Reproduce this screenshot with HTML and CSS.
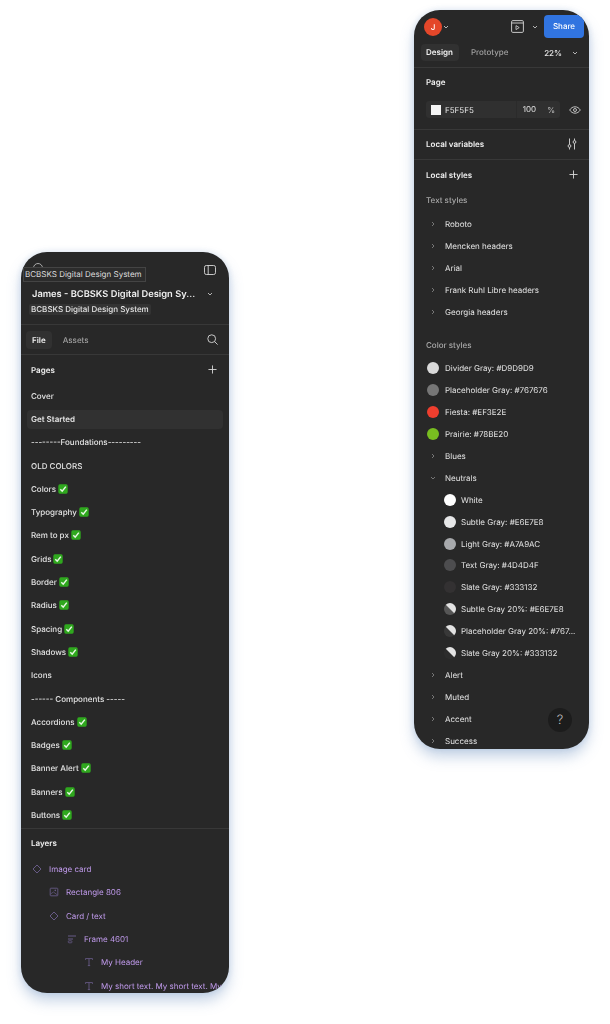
FILE: index.html
```html
<!DOCTYPE html>
<html lang="en">

<head>
  <meta charset="UTF-8">
  <meta name="viewport" content="width=device-width, initial-scale=1.0">
  <title>Design panels</title>
  <link rel="stylesheet" href="styles.css">
</head>

<body>
  <svg class="defs" width="0" height="0">
    <symbol id="check" viewBox="0 0 10 10">
      <rect x="0.3" y="0.3" width="9.4" height="9.4" rx="1.6" fill="#2fa81e"/>
      <path d="M2.3 5.2 4.2 7.2 7.8 2.6" fill="none" stroke="#e8f7e4" stroke-width="1.5"/>
    </symbol>
    <symbol id="chev-down" viewBox="0 0 8 8">
      <path d="M2 3 4 5 6 3" fill="none" stroke="currentColor" stroke-width="1"/>
    </symbol>
    <symbol id="chev-right" viewBox="0 0 8 8">
      <path d="M3 2 5 4 3 6" fill="none" stroke="currentColor" stroke-width="1"/>
    </symbol>
    <symbol id="plus" viewBox="0 0 10 10">
      <path d="M5 .5v9M.5 5h9" fill="none" stroke="currentColor" stroke-width="1"/>
    </symbol>
    <symbol id="diamond" viewBox="0 0 10 10">
      <path d="M5 1 9 5 5 9 1 5Z" fill="none" stroke="currentColor" stroke-width="1"/>
    </symbol>
    <symbol id="image" viewBox="0 0 10 10">
      <rect x="1.2" y="1.2" width="7.6" height="7.6" rx=".6" fill="none" stroke="currentColor" stroke-width=".9"/>
      <path d="M1.5 7 4.5 5 8.5 8" fill="none" stroke="currentColor" stroke-width=".7"/>
      <circle cx="6.3" cy="3.4" r=".8" fill="currentColor"/>
    </symbol>
    <symbol id="frame" viewBox="0 0 10 10">
      <path d="M1 2h8M1 5h5" fill="none" stroke="currentColor" stroke-width="1.1"/>
      <rect x="1.3" y="6.8" width="3.6" height="2" rx=".6" fill="none" stroke="currentColor" stroke-width=".8"/>
    </symbol>
    <symbol id="text" viewBox="0 0 10 10">
      <path d="M1.5 2.8V1.6h7v1.2M5 1.6v7M3.8 8.6h2.4" fill="none" stroke="currentColor" stroke-width=".9"/>
    </symbol>
  </svg>

  <div class="stage">

    <!-- File panel -->
    <div class="panel panel-file">
      <div class="file-top">
        <span class="logo-dot"></span>
        <span class="tooltip">BCBSKS Digital Design System</span>
        <svg class="icon-sidebar" width="12" height="10" viewBox="0 0 12 10">
          <rect x=".5" y=".5" width="11" height="9" rx="1.8" fill="none" stroke="#d8d8d8" stroke-width=".9"/>
          <path d="M4.2 .5v9" stroke="#d8d8d8" stroke-width=".9"/>
        </svg>
      </div>
      <div class="file-title">
        <span>James - BCBSKS Digital Design Sy...</span>
        <svg class="chev" width="8" height="8"><use href="#chev-down"/></svg>
      </div>
      <div class="file-sub"><span>BCBSKS Digital Design System</span></div>

      <div class="tabs tabs-file">
        <span class="tab active">File</span>
        <span class="tab">Assets</span>
        <svg class="icon-search" width="11" height="11" viewBox="0 0 11 11">
          <circle cx="4.7" cy="4.7" r="3.9" fill="none" stroke="#d8d8d8" stroke-width=".9"/>
          <path d="M7.6 7.6 10.6 10.6" stroke="#d8d8d8" stroke-width=".9"/>
        </svg>
      </div>

      <div class="section-pages">
        <div class="head">
          <span>Pages</span>
          <svg class="plus" width="9" height="9"><use href="#plus"/></svg>
        </div>
        <div class="page">Cover</div>
        <div class="page current">Get Started</div>
        <div class="page">--------Foundations---------</div>
        <div class="page">OLD COLORS</div>
        <div class="page">Colors <svg class="ok" width="10" height="10"><use href="#check"/></svg></div>
        <div class="page">Typography <svg class="ok" width="10" height="10"><use href="#check"/></svg></div>
        <div class="page">Rem to px <svg class="ok" width="10" height="10"><use href="#check"/></svg></div>
        <div class="page">Grids <svg class="ok" width="10" height="10"><use href="#check"/></svg></div>
        <div class="page">Border <svg class="ok" width="10" height="10"><use href="#check"/></svg></div>
        <div class="page">Radius <svg class="ok" width="10" height="10"><use href="#check"/></svg></div>
        <div class="page">Spacing <svg class="ok" width="10" height="10"><use href="#check"/></svg></div>
        <div class="page">Shadows <svg class="ok" width="10" height="10"><use href="#check"/></svg></div>
        <div class="page">Icons</div>
        <div class="page">------ Components -----</div>
        <div class="page">Accordions <svg class="ok" width="10" height="10"><use href="#check"/></svg></div>
        <div class="page">Badges <svg class="ok" width="10" height="10"><use href="#check"/></svg></div>
        <div class="page">Banner Alert <svg class="ok" width="10" height="10"><use href="#check"/></svg></div>
        <div class="page">Banners <svg class="ok" width="10" height="10"><use href="#check"/></svg></div>
        <div class="page">Buttons <svg class="ok" width="10" height="10"><use href="#check"/></svg></div>
      </div>

      <div class="section-layers">
        <div class="head"><span>Layers</span></div>
        <div class="layer"><svg width="10" height="10"><use href="#diamond"/></svg><span>Image card</span></div>
        <div class="layer depth1"><svg width="10" height="10"><use href="#image"/></svg><span>Rectangle 806</span></div>
        <div class="layer depth1"><svg width="10" height="10"><use href="#diamond"/></svg><span>Card / text</span></div>
        <div class="layer depth2"><svg width="10" height="10"><use href="#frame"/></svg><span>Frame 4601</span></div>
        <div class="layer depth3"><svg width="10" height="10"><use href="#text"/></svg><span>My Header</span></div>
        <div class="layer depth3"><svg width="10" height="10"><use href="#text"/></svg><span>My short text. My short text. My short text.</span></div>
      </div>
    </div>

    <!-- Design panel -->
    <div class="panel panel-design">
      <div class="design-top">
        <span class="avatar">J</span>
        <svg class="chev" width="8" height="8"><use href="#chev-down"/></svg>
        <svg class="icon-present" width="13" height="13" viewBox="0 0 13 13">
          <rect x=".6" y=".6" width="11.8" height="11.8" rx="1.2" fill="none" stroke="#d8d8d8" stroke-width=".9"/>
          <path d="M.6 3h11.8" stroke="#d8d8d8" stroke-width=".9"/>
          <path d="M5 5.6v4l3.2-2z" fill="none" stroke="#d8d8d8" stroke-width=".8"/>
        </svg>
        <svg class="chev chev-present" width="8" height="8"><use href="#chev-down"/></svg>
        <span class="share">Share</span>
      </div>

      <div class="tabs tabs-design">
        <span class="tab active">Design</span>
        <span class="tab">Prototype</span>
        <span class="zoom">22%</span>
        <svg class="chev" width="8" height="8"><use href="#chev-down"/></svg>
      </div>

      <div class="section-page">
        <div class="head"><span>Page</span></div>
        <div class="fill-row">
          <div class="fill">
            <span class="fill-swatch"></span>
            <span class="fill-hex">F5F5F5</span>
            <span class="fill-pct">100</span>
            <span class="fill-unit">%</span>
          </div>
          <svg class="icon-eye" width="12" height="8" viewBox="0 0 12 8">
            <path d="M.7 4C2 1.9 3.8.8 6 .8S10 1.9 11.3 4C10 6.1 8.2 7.2 6 7.2S2 6.1.7 4Z" fill="none" stroke="#cfcfcf" stroke-width=".9"/>
            <circle cx="6" cy="4" r="1.5" fill="none" stroke="#cfcfcf" stroke-width=".9"/>
          </svg>
        </div>
      </div>

      <div class="section-vars">
        <span>Local variables</span>
        <svg width="10" height="12" viewBox="0 0 10 12">
          <path d="M2.5 .5v6M2.5 9.5v2M7.5 .5v2M7.5 5.5v6" stroke="#d8d8d8" stroke-width=".9"/>
          <circle cx="2.5" cy="8" r="1.4" fill="none" stroke="#d8d8d8" stroke-width=".9"/>
          <circle cx="7.5" cy="4" r="1.4" fill="none" stroke="#d8d8d8" stroke-width=".9"/>
        </svg>
      </div>

      <div class="section-styles">
        <div class="head">
          <span>Local styles</span>
          <svg class="plus" width="9" height="9"><use href="#plus"/></svg>
        </div>

        <div class="sub-head">Text styles</div>
        <div class="style"><svg class="arrow" width="8" height="8"><use href="#chev-right"/></svg>Roboto</div>
        <div class="style"><svg class="arrow" width="8" height="8"><use href="#chev-right"/></svg>Mencken headers</div>
        <div class="style"><svg class="arrow" width="8" height="8"><use href="#chev-right"/></svg>Arial</div>
        <div class="style"><svg class="arrow" width="8" height="8"><use href="#chev-right"/></svg>Frank Ruhl Libre headers</div>
        <div class="style"><svg class="arrow" width="8" height="8"><use href="#chev-right"/></svg>Georgia headers</div>

        <div class="sub-head sub-color">Color styles</div>
        <div class="style"><span class="dot c-divider"></span>Divider Gray: #D9D9D9</div>
        <div class="style"><span class="dot c-placeholder"></span>Placeholder Gray: #767676</div>
        <div class="style"><span class="dot c-fiesta"></span>Fiesta: #EF3E2E</div>
        <div class="style"><span class="dot c-prairie"></span>Prairie: #78BE20</div>
        <div class="style"><svg class="arrow" width="8" height="8"><use href="#chev-right"/></svg>Blues</div>
        <div class="style"><svg class="arrow" width="8" height="8"><use href="#chev-down"/></svg>Neutrals</div>
        <div class="style nested"><span class="dot c-white"></span>White</div>
        <div class="style nested"><span class="dot c-subtle"></span>Subtle Gray: #E6E7E8</div>
        <div class="style nested"><span class="dot c-light"></span>Light Gray: #A7A9AC</div>
        <div class="style nested"><span class="dot c-text"></span>Text Gray: #4D4D4F</div>
        <div class="style nested"><span class="dot c-slate"></span>Slate Gray: #333132</div>
        <div class="style nested"><span class="dot alpha a-subtle"></span>Subtle Gray 20%: #E6E7E8</div>
        <div class="style nested"><span class="dot alpha a-placeholder"></span>Placeholder Gray 20%: #767...</div>
        <div class="style nested"><span class="dot alpha a-slate"></span>Slate Gray 20%: #333132</div>
        <div class="style"><svg class="arrow" width="8" height="8"><use href="#chev-right"/></svg>Alert</div>
        <div class="style"><svg class="arrow" width="8" height="8"><use href="#chev-right"/></svg>Muted</div>
        <div class="style"><svg class="arrow" width="8" height="8"><use href="#chev-right"/></svg>Accent</div>
        <div class="style"><svg class="arrow" width="8" height="8"><use href="#chev-right"/></svg>Success</div>
      </div>

      <span class="help">?</span>
    </div>

  </div>
</body>

</html>
```

FILE: styles.css
```css
body {
  margin: 0;
  background: #fff;
  font-family: Inter, "Liberation Sans", sans-serif;
  color: #e4e4e4;
  text-rendering: geometricPrecision;
}

.defs {
  position: absolute;
}

.stage {
  display: flex;
  align-items: flex-start;
  height: 1024px;
  overflow: hidden;
}

.panel {
  position: relative;
  background: #282828;
  border-radius: 26px;
  overflow: hidden;
  box-shadow: 0 8px 14px rgba(92, 132, 184, 0.35), 0 0 6px rgba(92, 132, 184, 0.2);
  filter: blur(0.3px);
  font-size: 8px;
  font-weight: 400;
  white-space: nowrap;
}

.panel-file {
  width: 208px;
  height: 741px;
  margin: 252px 0 0 21px;
}

.panel-design {
  width: 175px;
  height: 739px;
  margin: 10px 0 0 185px;
}

.head {
  display: flex;
  justify-content: space-between;
  align-items: center;
  padding-bottom: 1px;
  box-sizing: border-box;
  font-weight: 600;
  color: #f0f0f0;
}

.plus {
  color: #d8d8d8;
}

.chev {
  flex: none;
  color: #b4b4b4;
}

.tabs {
  display: flex;
  align-items: center;
  border-bottom: 1px solid #383838;
  box-sizing: border-box;
}

.tab {
  color: #a0a0a0;
  border-radius: 4px;
  font-weight: 500;
}

.tab.active {
  background: #313131;
  color: #f0f0f0;
  font-weight: 600;
}

/* file panel */
.file-top {
  position: relative;
  display: flex;
  justify-content: flex-end;
  height: 35px;
  padding: 13px 13px 0 0;
  box-sizing: border-box;
}

.logo-dot {
  position: absolute;
  left: 12px;
  top: 11px;
  width: 8px;
  height: 8px;
  border: 1px solid #aaa;
  border-radius: 50%;
}

.tooltip {
  position: absolute;
  left: 2px;
  top: 15px;
  height: 13px;
  padding: 0 3px 0 1px;
  line-height: 13px;
  background: #2c2c2c;
  border: 1px solid #444;
  color: #dcdcdc;
}

.file-title {
  display: flex;
  justify-content: space-between;
  align-items: center;
  height: 14px;
  padding: 0 15px 0 11px;
  font-size: 9.3px;
  font-weight: 600;
  color: #f0f0f0;
}

.file-sub {
  height: 23px;
  padding: 3px 0 0 8px;
  box-sizing: border-box;
}

.file-sub span {
  display: inline-block;
  padding: 0 2px;
  line-height: 11px;
  background: #333;
  border-radius: 2px;
  font-weight: 500;
}

.tabs-file {
  height: 31px;
  padding: 0 11px 0 5px;
  border-top: 1px solid #383838;
}

.tabs-file .tab {
  padding: 3px 6px;
  line-height: 12px;
}

.tabs-file .tab.active {
  margin-right: 5px;
}

.icon-search {
  margin-left: auto;
}

.section-pages {
  height: 474px;
  padding-top: 7px;
  box-sizing: border-box;
  border-bottom: 1px solid #383838;
}

.section-pages .head {
  height: 16px;
  padding: 0 12px 1px 10px;
  margin-bottom: 9px;
}

.page {
  display: flex;
  align-items: center;
  gap: 2px;
  height: 18.3px;
  margin: 0 6px 5px;
  padding: 0 4px 1px;
  box-sizing: border-box;
  border-radius: 4px;
  font-weight: 500;
}

.page.current {
  background: #313131;
  font-weight: 600;
}

.section-layers {
  padding-top: 6px;
}

.section-layers .head {
  height: 16px;
  padding: 0 10px 1px;
  margin-bottom: 7px;
}

.layer {
  display: flex;
  align-items: center;
  gap: 7px;
  height: 23.3px;
  padding-left: 11px;
  padding-bottom: 1px;
  box-sizing: border-box;
  color: #c09aec;
}

.layer svg {
  flex: none;
  color: #675a86;
}

.depth1 {
  padding-left: 28px;
}

.depth2 {
  padding-left: 46px;
}

.depth3 {
  padding-left: 63px;
}

/* design panel */
.design-top {
  display: flex;
  align-items: center;
  height: 28px;
  padding: 5px 5px 0 10px;
  box-sizing: border-box;
}

.avatar {
  flex: none;
  width: 18px;
  height: 18px;
  line-height: 18px;
  border-radius: 50%;
  background: #e4472a;
  color: #fff;
  text-align: center;
  font-weight: 500;
}

.icon-present {
  margin-left: 61px;
}

.chev-present {
  margin-left: 7px;
}

.share {
  margin-left: 5px;
  width: 40px;
  height: 23px;
  line-height: 23px;
  border-radius: 4px;
  background: #3174e0;
  color: #fff;
  text-align: center;
  font-weight: 500;
}

.tabs-design {
  height: 30px;
  padding: 0 10px 0 7px;
}

.tabs-design .tab {
  padding: 3px 6px;
  line-height: 11px;
}

.tabs-design .tab.active {
  padding: 3px 6px 3px 5px;
  margin-right: 6px;
}

.zoom {
  margin-left: auto;
  margin-right: 9px;
  font-weight: 500;
}

.section-page {
  height: 62px;
  padding: 6px 0 0 12px;
  box-sizing: border-box;
  border-bottom: 1px solid #383838;
}

.section-page .head {
  height: 16px;
  margin-bottom: 11px;
}

.fill-row {
  display: flex;
  align-items: center;
}

.fill {
  display: flex;
  align-items: center;
  flex: none;
  width: 134px;
  height: 17px;
  padding: 0 5px;
  box-sizing: border-box;
  background: #303030;
  border-radius: 3px;
}

.fill-swatch {
  flex: none;
  width: 10px;
  height: 10px;
  background: #f5f5f5;
}

.fill-hex {
  margin-left: 4px;
}

.fill-pct {
  margin-left: auto;
  padding-left: 6px;
  line-height: 17px;
  border-left: 1px solid #2b2b2b;
}

.fill-unit {
  margin-left: 11px;
  color: #bbb;
}

.icon-eye {
  margin-left: 9px;
}

.section-vars {
  display: flex;
  justify-content: space-between;
  align-items: center;
  height: 30px;
  padding: 0 12px 1px;
  box-sizing: border-box;
  border-bottom: 1px solid #383838;
  font-weight: 600;
  color: #f0f0f0;
}

.section-styles {
  padding-top: 7px;
}

.section-styles .head {
  height: 16px;
  padding: 0 11px 1px 12px;
}

.sub-head {
  height: 22px;
  line-height: 22px;
  margin-top: 6px;
  margin-bottom: 2.5px;
  padding-left: 12px;
  color: #a8a8a8;
  font-weight: 500;
}

.sub-color {
  margin-top: 11px;
  margin-bottom: 2px;
}

.style {
  display: flex;
  align-items: center;
  height: 21.9px;
  padding-left: 31px;
  padding-bottom: 1px;
  box-sizing: border-box;
  position: relative;
}

.arrow {
  position: absolute;
  left: 15px;
  color: #777;
}

.dot {
  position: absolute;
  left: 13px;
  width: 12px;
  height: 12px;
  border-radius: 50%;
}

.nested {
  padding-left: 47px;
}

.nested .dot {
  left: 30px;
}

.c-divider { background: #d9d9d9; }
.c-placeholder { background: #767676; }
.c-fiesta { background: #ef3e2e; }
.c-prairie { background: #78be20; }
.c-white { background: #fff; }
.c-subtle { background: #e6e7e8; }
.c-light { background: #a7a9ac; }
.c-text { background: #4d4d4f; }
.c-slate { background: #333132; }

/* the light band is the checker showing through a 20% fill */
.a-subtle { background: linear-gradient(45deg, #565656 47%, #e2e2e2 53%, #e2e2e2 82%, #565656 88%); }
.a-placeholder { background: linear-gradient(45deg, #383838 47%, #e2e2e2 53%, #e2e2e2 82%, #383838 88%); }
.a-slate { background: linear-gradient(45deg, #2c2c2c 47%, #e2e2e2 53%, #e2e2e2 82%, #2c2c2c 88%); }

.help {
  position: absolute;
  left: 134px;
  top: 698px;
  width: 24px;
  height: 24px;
  line-height: 24px;
  border-radius: 50%;
  background: #1c1c1c;
  color: #bbb;
  text-align: center;
  font-size: 13px;
  font-weight: 300;
}
```
